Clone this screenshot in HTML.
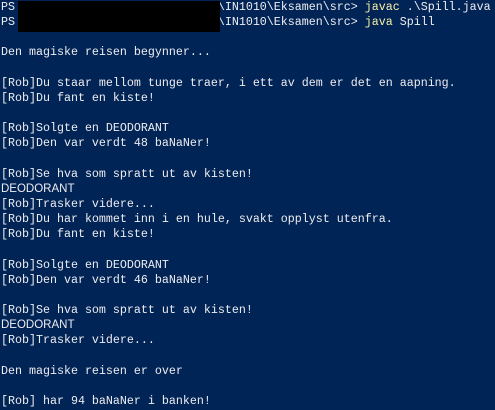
<!DOCTYPE html>
<html><head><style>
html,body{margin:0;padding:0;width:495px;height:410px;overflow:hidden;background:#012456;}
pre{margin:0;padding:0 0 0 1px;position:absolute;top:0;left:0;font-family:"Liberation Mono",monospace;font-size:11.67px;line-height:15.15px;color:#eeedf0;}
.y{color:#f9f1a5;}
.s{font-family:"Liberation Sans",sans-serif;font-size:11.5px;}
.r{position:absolute;left:18px;top:1px;width:202px;height:31px;background:#000;}
</style></head><body>
<pre>PS                             \IN1010\Eksamen\src&gt; <span class="y">javac</span> .\Spill.java
PS                             \IN1010\Eksamen\src&gt; <span class="y">java</span> Spill

Den magiske reisen begynner...

[Rob]Du staar mellom tunge traer, i ett av dem er det en aapning.
[Rob]Du fant en kiste!

[Rob]Solgte en DEODORANT
[Rob]Den var verdt 48 baNaNer!

[Rob]Se hva som spratt ut av kisten!
<span class="s">DEODORANT</span>
[Rob]Trasker videre...
[Rob]Du har kommet inn i en hule, svakt opplyst utenfra.
[Rob]Du fant en kiste!

[Rob]Solgte en DEODORANT
[Rob]Den var verdt 46 baNaNer!

[Rob]Se hva som spratt ut av kisten!
<span class="s">DEODORANT</span>
[Rob]Trasker videre...

Den magiske reisen er over

[Rob] har 94 baNaNer i banken!</pre>
<div class="r"></div>
</body></html>
